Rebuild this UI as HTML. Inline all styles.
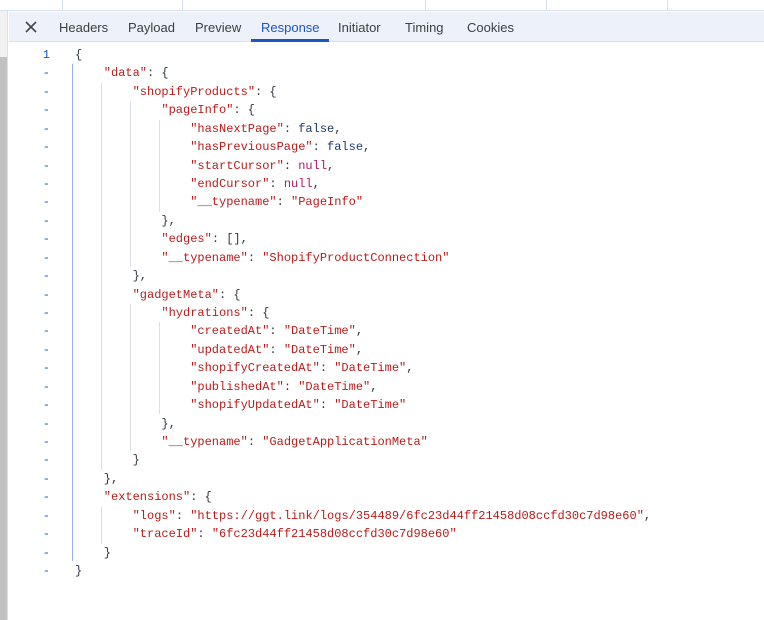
<!DOCTYPE html>
<html><head><style>
*{margin:0;padding:0;box-sizing:border-box}
body{width:764px;height:620px;overflow:hidden;background:#fff;position:relative;font-family:"Liberation Sans",sans-serif}
.top{position:absolute;left:0;top:0;width:764px;height:11px;background:#fff;border-bottom:1px solid #d6e0f0}
.vl{position:absolute;top:0;height:11px;width:1px;background:#d6e0f0}
.leftcol{position:absolute;left:0;top:11px;width:8px;height:609px;background:#f1f1f1;border-right:1px solid #d6e0f0}
.thumb{position:absolute;left:0;top:57px;width:7px;height:563px;background:#c1c1c1}
.tabs{position:absolute;left:9px;top:12px;width:755px;height:30px;background:#edf1fa;border-bottom:1px solid #d6e0f0}
.tab{position:absolute;top:8px;font-size:13px;color:#3c4043}
.tab.a{color:#1a56c7}
.ul{position:absolute;left:251px;top:39px;width:78px;height:3px;background:#1a56c7}
.code{position:absolute;left:0;top:46px;font-family:"Liberation Mono",monospace;font-size:12px}
.ln{position:absolute;height:18.43px;line-height:18.43px;white-space:pre;left:75px;color:#303942}
.num{position:absolute;left:30px;width:20px;text-align:right;color:#1a56c7;line-height:18.43px;height:18.43px}
.g{position:absolute;width:1px;background:#d6e0f0}
.g1{background:#8fb4ef}
.k{color:#b71c1c}.s{color:#b71c1c}.b{color:#1f3a6a}.n{color:#a3206e}
</style></head><body>
<div class="top"></div>
<div class="vl" style="left:62px"></div><div class="vl" style="left:182px"></div><div class="vl" style="left:425px"></div><div class="vl" style="left:546px"></div><div class="vl" style="left:667px"></div>
<div style="position:absolute;left:0;top:14px;font-size:9px;color:#333">^</div>
<div class="leftcol"></div><div class="thumb"></div>
<div class="tabs">
<svg style="position:absolute;left:16px;top:9px" width="12" height="12" viewBox="0 0 12 12"><path d="M1 1L11 11M11 1L1 11" stroke="#474747" stroke-width="1.6"/></svg>
<div class="tab" style="left:50px">Headers</div>
<div class="tab" style="left:119px">Payload</div>
<div class="tab" style="left:186px">Preview</div>
<div class="tab a" style="left:252px">Response</div>
<div class="tab" style="left:329px">Initiator</div>
<div class="tab" style="left:396px">Timing</div>
<div class="tab" style="left:458px">Cookies</div>
</div>
<div class="ul"></div>
<div class="code">
<div class="g g1" style="left:72px;top:18.4px;height:497px"></div>
<div class="g" style="left:101px;top:36.9px;height:387px"></div>
<div class="g" style="left:130px;top:55.3px;height:166px"></div>
<div class="g" style="left:159px;top:73.7px;height:92px"></div>
<div class="g" style="left:130px;top:258px;height:147px"></div>
<div class="g" style="left:159px;top:276.4px;height:92px"></div>
<div class="g" style="left:101px;top:460.7px;height:37px"></div>
<div id="c"></div>
</div>
<script>
var L=[
[0,'{'],
[1,'<span class=k>"data"</span>: {'],
[2,'<span class=k>"shopifyProducts"</span>: {'],
[3,'<span class=k>"pageInfo"</span>: {'],
[4,'<span class=k>"hasNextPage"</span>: <span class=b>false</span>,'],
[4,'<span class=k>"hasPreviousPage"</span>: <span class=b>false</span>,'],
[4,'<span class=k>"startCursor"</span>: <span class=n>null</span>,'],
[4,'<span class=k>"endCursor"</span>: <span class=n>null</span>,'],
[4,'<span class=k>"__typename"</span>: <span class=s>"PageInfo"</span>'],
[3,'},'],
[3,'<span class=k>"edges"</span>: [],'],
[3,'<span class=k>"__typename"</span>: <span class=s>"ShopifyProductConnection"</span>'],
[2,'},'],
[2,'<span class=k>"gadgetMeta"</span>: {'],
[3,'<span class=k>"hydrations"</span>: {'],
[4,'<span class=k>"createdAt"</span>: <span class=s>"DateTime"</span>,'],
[4,'<span class=k>"updatedAt"</span>: <span class=s>"DateTime"</span>,'],
[4,'<span class=k>"shopifyCreatedAt"</span>: <span class=s>"DateTime"</span>,'],
[4,'<span class=k>"publishedAt"</span>: <span class=s>"DateTime"</span>,'],
[4,'<span class=k>"shopifyUpdatedAt"</span>: <span class=s>"DateTime"</span>'],
[3,'},'],
[3,'<span class=k>"__typename"</span>: <span class=s>"GadgetApplicationMeta"</span>'],
[2,'}'],
[1,'},'],
[1,'<span class=k>"extensions"</span>: {'],
[2,'<span class=k>"logs"</span>: <span class=s>"https://ggt.link/logs/354489/6fc23d44ff21458d08ccfd30c7d98e60"</span>,'],
[2,'<span class=k>"traceId"</span>: <span class=s>"6fc23d44ff21458d08ccfd30c7d98e60"</span>'],
[1,'}'],
[0,'}']];
var h='';
L.forEach(function(l,i){var t=i*18.43;
h+='<div class="num" style="top:'+t+'px">'+(i?'-':'1')+'</div>';
h+='<div class="ln" style="top:'+t+'px;left:'+(75+l[0]*28.8)+'px">'+l[1]+'</div>';});
document.getElementById('c').innerHTML=h;
</script>
</body></html>
